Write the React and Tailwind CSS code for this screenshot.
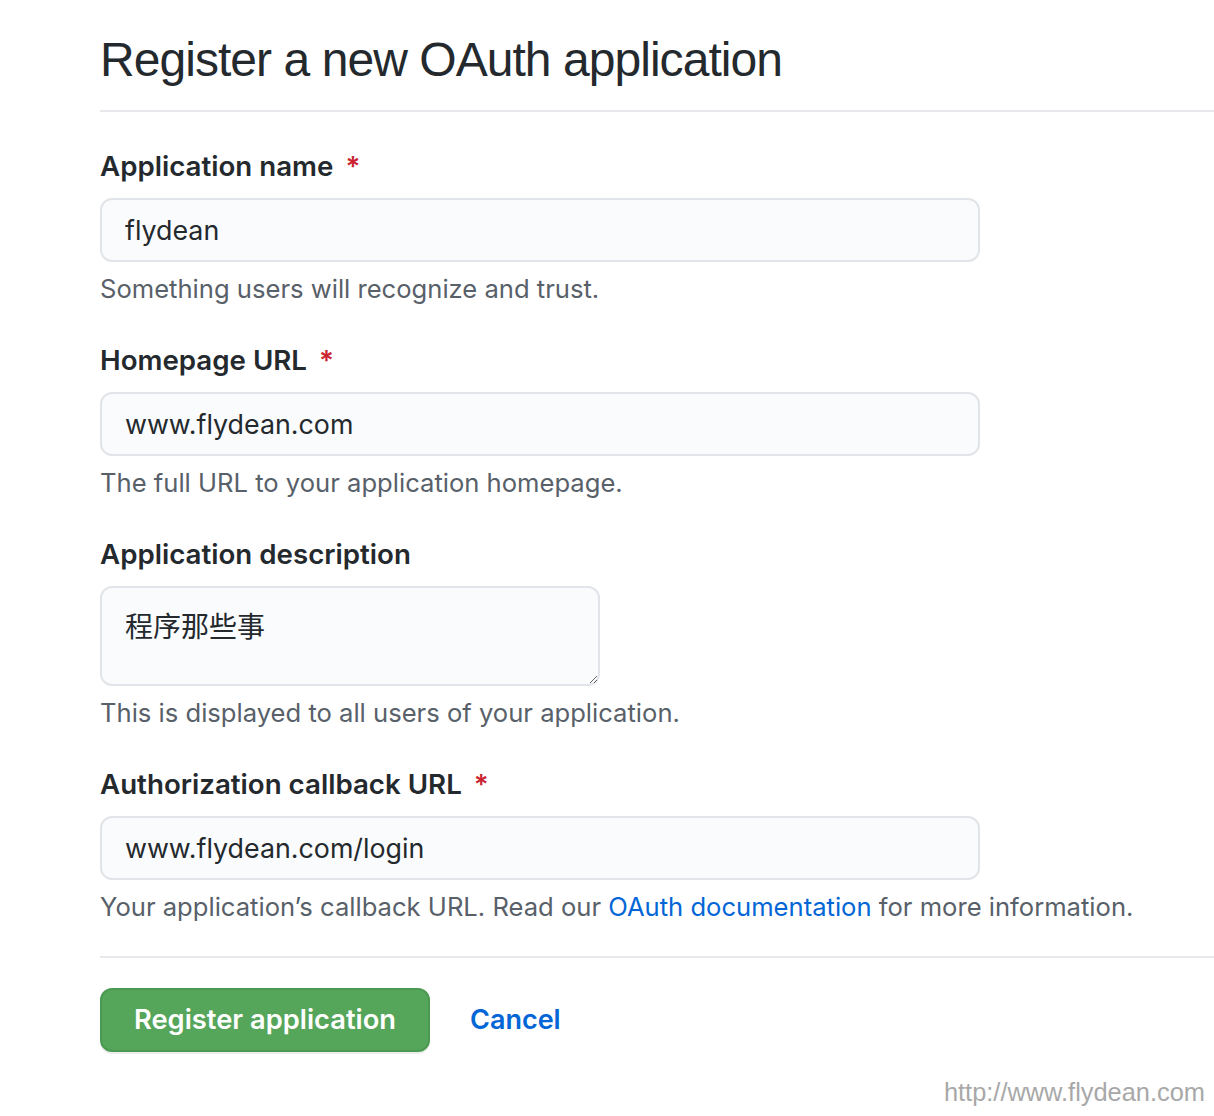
import { useState } from 'react';

const sans = 'font-["Inter","Noto_Sans_CJK_SC",sans-serif]';

function Label({ children, required }) {
  return (
    <label className="block text-[27.7px] leading-[42px] font-semibold text-[#24292e]">
      {children}
      {required && <span className="ml-[12px] text-[#cb2431]">*</span>}
    </label>
  );
}

function Note({ children }) {
  return <p className="mt-[9px] text-[25.6px] leading-[36px] text-[#586069]">{children}</p>;
}

function TextField({ value, onChange }) {
  return (
    <input
      value={value}
      onChange={(e) => onChange(e.target.value)}
      className="mt-[11px] block h-[64px] w-[880px] rounded-[12px] border-2 border-[#e1e4e8] bg-[#fafbfc] px-[23px] text-[26.8px] text-[#24292e] outline-none"
    />
  );
}

export default function App() {
  const [name, setName] = useState('flydean');
  const [homepage, setHomepage] = useState('www.flydean.com');
  const [desc, setDesc] = useState('程序那些事');
  const [callback, setCallback] = useState('www.flydean.com/login');

  return (
    <div className={`min-h-[1116px] w-[1214px] bg-white ${sans}`}>
      <div className="pl-[100px] pt-[30px]">
        {/* Header */}
        <div className="border-b-2 border-[#e6e8eb] pb-[20px]">
          <h1 className='font-["Liberation_Sans",sans-serif] text-[48px] leading-[60px] font-normal tracking-[-0.95px] text-[#24292e]'>
            Register a new OAuth application
          </h1>
        </div>

        <form className="pt-[33px]" onSubmit={(e) => e.preventDefault()}>
          <Label required>Application name</Label>
          <TextField value={name} onChange={setName} />
          <Note>Something users will recognize and trust.</Note>

          <div className="mt-[32px]">
            <Label required>Homepage URL</Label>
            <TextField value={homepage} onChange={setHomepage} />
            <Note>The full URL to your application homepage.</Note>
          </div>

          <div className="mt-[32px]">
            <Label>Application description</Label>
            <textarea
              value={desc}
              onChange={(e) => setDesc(e.target.value)}
              className="mt-[11px] block h-[100px] w-[500px] resize-y rounded-[12px] border-2 border-[#e1e4e8] bg-[#fafbfc] px-[23px] py-[19px] text-[28px] leading-[40px] text-[#24292e] outline-none"
            />
            <Note>This is displayed to all users of your application.</Note>
          </div>

          <div className="mt-[32px]">
            <Label required>Authorization callback URL</Label>
            <TextField value={callback} onChange={setCallback} />
            <Note>
              Your application’s callback URL. Read our{' '}
              <a href="#" className="text-[#0366d6]">OAuth documentation</a> for more information.
            </Note>
          </div>

          <div className="mt-[31px] border-t-2 border-[#e6e8eb] pt-[30px]">
            <div className="flex items-center">
              <button
                type="submit"
                className="h-[64px] w-[330px] rounded-[12px] border-2 border-[#4b9a52] bg-[#55a55b] text-[27.3px] font-semibold text-white shadow-[0_2px_0_rgba(27,31,35,0.08)]"
              >
                Register application
              </button>
              <a href="#" className="ml-[40px] text-[27px] font-semibold text-[#0366d6]">
                Cancel
              </a>
            </div>
          </div>
        </form>
      </div>

      <div className='pr-[9px] pt-[24px] text-right font-["Liberation_Sans",sans-serif] text-[25.4px] leading-[32px] text-[#a8a8a8]'>
        http://www.flydean.com
      </div>
    </div>
  );
}
